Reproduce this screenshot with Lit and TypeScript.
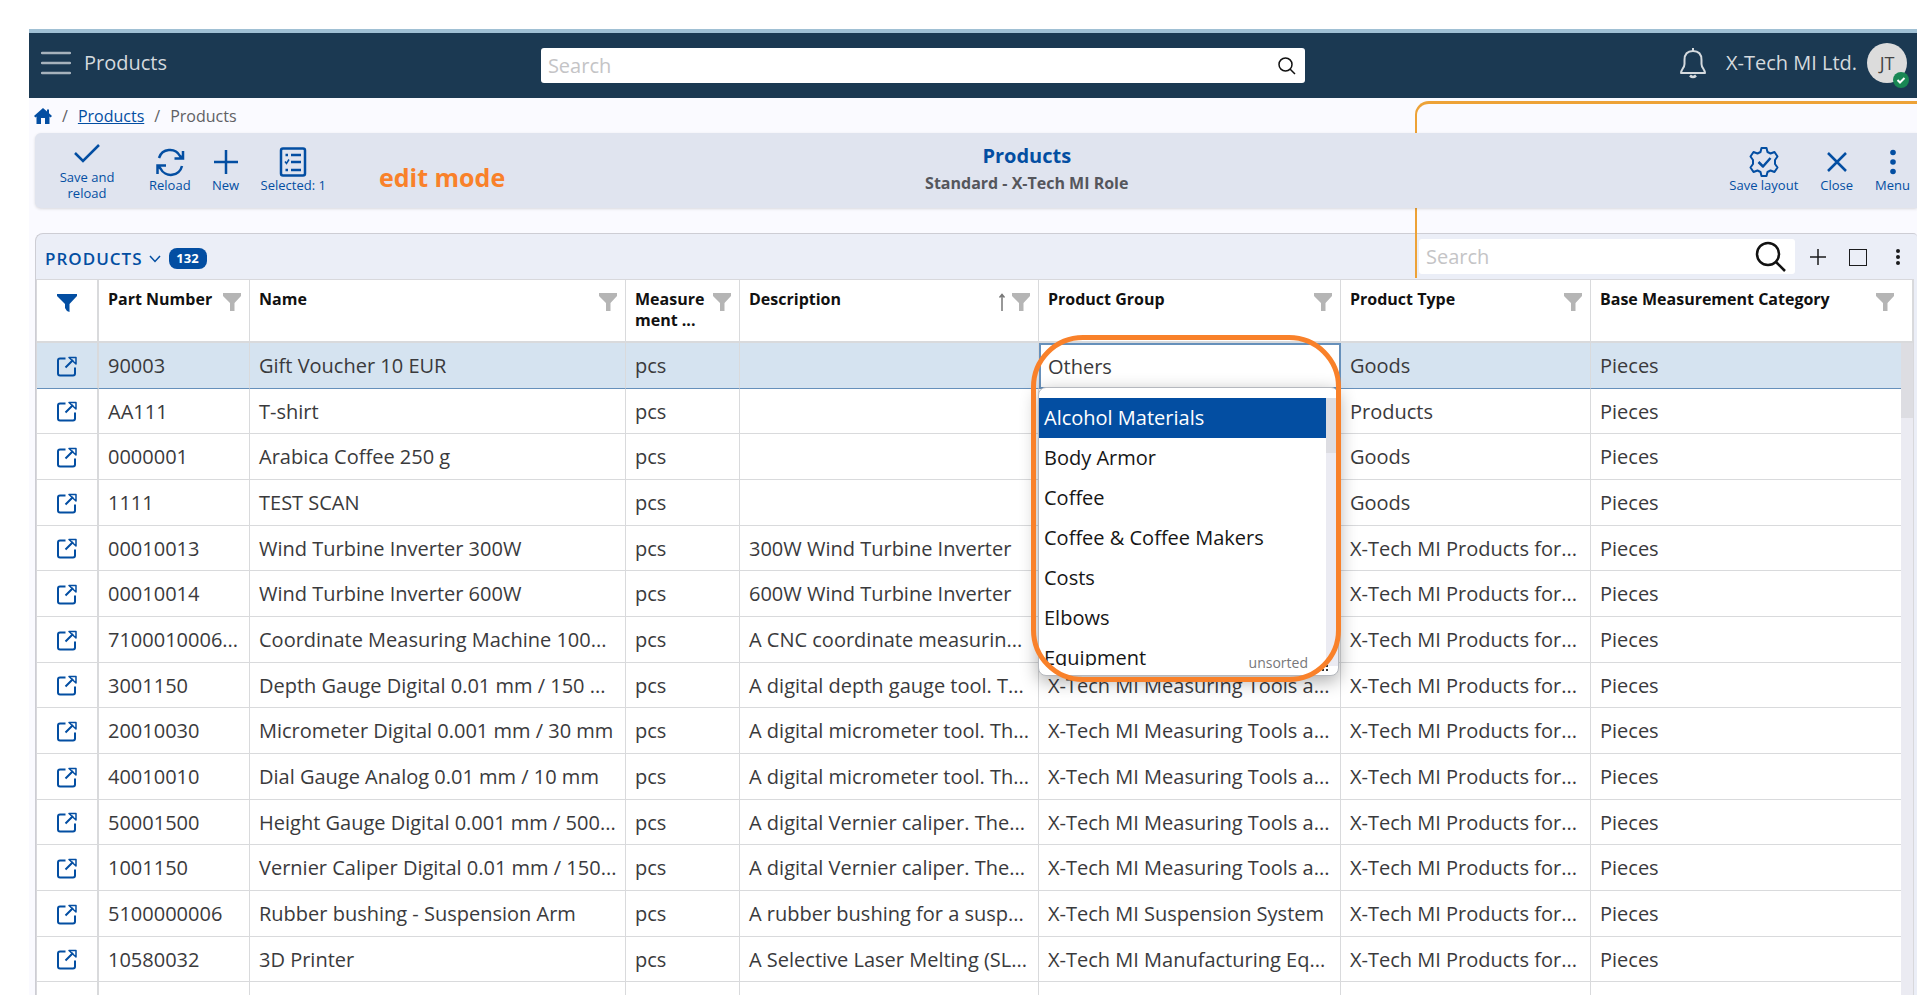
import { LitElement, html, css, svg } from "lit";
import { customElement } from "lit/decorators.js";

const funnel = html`<svg width="18" height="18" viewBox="0 0 18 18" fill="currentColor" aria-hidden="true"><path d="M0 0H18V3L11.500 10V18H7V10L0 3Z"/></svg>`;
const openIcon = html`<svg width="22" height="22" viewBox="0 0 22 22" fill="none" stroke="currentColor" stroke-width="2" aria-hidden="true"><path d="M9.500 3.500H4Q2 3.500 2 5.500V18.500Q2 20.500 4 20.500H17Q19 20.500 19 18.500V12.500M9.500 12.500L17 5"/><path d="M13 2.500H20V9Z" stroke-width="1.500" stroke-linejoin="round"/></svg>`;

const dots = svg`<circle cx="16" cy="5.500" r="2.800"/><circle cx="16" cy="15" r="2.800"/><circle cx="16" cy="24.500" r="2.800"/>`;

const rows: string[][] = [
  ["90003", "Gift Voucher 10 EUR", "", "Others", "Goods"],
  ["AA111", "T-shirt", "", "", "Products"],
  ["0000001", "Arabica Coffee 250 g", "", "", "Goods"],
  ["1111", "TEST SCAN", "", "", "Goods"],
  ["00010013", "Wind Turbine Inverter 300W", "300W Wind Turbine Inverter", "", "X-Tech MI Products for..."],
  ["00010014", "Wind Turbine Inverter 600W", "600W Wind Turbine Inverter", "", "X-Tech MI Products for..."],
  ["7100010006...", "Coordinate Measuring Machine 100...", "A CNC coordinate measurin...", "", "X-Tech MI Products for..."],
  ["3001150", "Depth Gauge Digital 0.01 mm / 150 ...", "A digital depth gauge tool. T...", "X-Tech MI Measuring Tools a...", "X-Tech MI Products for..."],
  ["20010030", "Micrometer Digital 0.001 mm / 30 mm", "A digital micrometer tool. Th...", "X-Tech MI Measuring Tools a...", "X-Tech MI Products for..."],
  ["40010010", "Dial Gauge Analog 0.01 mm / 10 mm", "A digital micrometer tool. Th...", "X-Tech MI Measuring Tools a...", "X-Tech MI Products for..."],
  ["50001500", "Height Gauge Digital 0.001 mm / 500...", "A digital Vernier caliper. The...", "X-Tech MI Measuring Tools a...", "X-Tech MI Products for..."],
  ["1001150", "Vernier Caliper Digital 0.01 mm / 150...", "A digital Vernier caliper. The...", "X-Tech MI Measuring Tools a...", "X-Tech MI Products for..."],
  ["5100000006", "Rubber bushing - Suspension Arm", "A rubber bushing for a susp...", "X-Tech MI Suspension System", "X-Tech MI Products for..."],
  ["10580032", "3D Printer", "A Selective Laser Melting (SL...", "X-Tech MI Manufacturing Eq...", "X-Tech MI Products for..."],
];
const groups = ["Alcohol Materials", "Body Armor", "Coffee", "Coffee & Coffee Makers", "Costs", "Elbows", "Equipment"];

@customElement("app-root")
export class AppRoot extends LitElement {
  static styles = css`
    :host { display: block; height: 100vh; overflow: hidden; box-sizing: border-box; padding: 29px 0 0 29px; background: #fff; color: #3a3a3c; font: 20px/28px "Open Sans", "Noto Sans", sans-serif; }
    * { box-sizing: border-box; }
    button { font: inherit; color: inherit; background: none; border: 0; padding: 0; margin: 0; display: flex; align-items: center; justify-content: center; }
    input { font: inherit; border: 0; outline: 0; padding: 0; min-width: 0; background: #fff; color: #333; }
    input::placeholder { color: #c4c4c6; opacity: 1; }
    svg { display: block; flex: none; }
    .page { position: relative; background: #fafaff; height: 100%; }
    header { position: relative; display: grid; grid-template-columns: 5fr 764px 6fr; column-gap: 11px; align-items: center; height: 69px; border-top: 4px solid #a0c0d4; background: #1b3952; color: #d5dade; }
    .brand { display: flex; align-items: center; gap: 13px; padding: 0 0 5px 12px; }
    .account { display: flex; align-items: center; justify-content: flex-end; padding: 0 10px 5px 0; }
    .company { padding: 0 10px 0 19px; }
    .avatar { position: relative; width: 40px; height: 40px; border-radius: 50%; background: #dcdcdc; color: #444; font-size: 18px; }
    .status { position: absolute; right: -2px; bottom: -5px; }
    .search { display: flex; align-items: center; height: 35px; background: #fff; border-radius: 3px; padding: 0 8px 0 7px; color: #111; }
    .search input { flex: 1; }
    nav { display: flex; align-items: center; gap: 10px; height: 35px; padding-left: 5px; font-size: 16px; line-height: 24px; color: #606064; }
    nav a { color: #034ea2; }
    .toolbar { position: relative; z-index: 2; display: grid; grid-template-columns: 9fr auto 8fr; height: 75px; margin-left: 6px; background: #e0e4ef; border-radius: 6px 0 0 6px; box-shadow: 0 1px 3px #00000022; color: #034ea2; }
    .tools { display: flex; align-items: center; font-size: 13px; line-height: 16px; padding-bottom: 1px; }
    .tools button { flex-direction: column; gap: 0; }
    .left { padding-left: 18px; gap: 20px; }
    .right { justify-content: flex-end; gap: 22px; padding-right: 7px; }
    .save { width: 68px; margin-right: 8px; }
    .mode { margin: 14px 0 0 33px; font-size: 25px; line-height: 32px; font-weight: 700; color: #f9812a; }
    .title { text-align: center; padding: 9px 0 0 3px; font-weight: 700; font-size: 16px; line-height: 26px; color: #55565c; }
    h1 { margin: 0; font-size: 20px; line-height: 28px; color: #034ea2; }
    .panel { position: relative; margin: 25px 0 0 6px; border: 1px solid #cdcdd4; border-right: 0; border-radius: 8px 4px 0 0; background: #ebeef7; }
    .panelbar { display: flex; align-items: center; height: 45px; padding: 0 9px; color: #1b1b1d; }
    .caption { display: flex; align-items: center; padding-top: 4px; }
    h2 { margin: 0; font-size: 17px; line-height: 24px; font-weight: 600; letter-spacing: 1px; color: #034ea2; }
    .chevron { color: #034ea2; margin: 0 8px 0 6px; }
    .count { width: 38px; height: 21px; border-radius: 8px; background: #034ea2; color: #fff; font-size: 13px; font-weight: 700; line-height: 21px; text-align: center; }
    .filter { width: 376px; margin: 0 13px 0 auto; }
    .icons { display: flex; gap: 20px; }
    .grid { position: relative; border: solid #d8d8dc; border-width: 1px 1px 0 1px; background: #fff; margin: 0 3px 0 0; }
    table { width: 100%; table-layout: fixed; border-collapse: separate; border-spacing: 0; }
    .c0 { width: 62px; } .c1 { width: 151px; } .c2 { width: 376px; } .c3 { width: 114px; } .c4 { width: 299px; } .c5 { width: 302px; } .c6 { width: 250px; }
    th { height: 63px; border-right: 1px solid #d9dadc; border-bottom: 2px solid #d9dadc; padding: 9px 8px 0 9px; vertical-align: top; text-align: left; font-size: 16px; line-height: 21px; font-weight: 700; color: #111; white-space: nowrap; }
    .hd { display: flex; align-items: flex-start; justify-content: space-between; }
    .hd svg { margin-top: 4px; color: #b5b5b5; }
    th:last-child svg { margin-right: 10px; }
    .hd .sort { margin: 4px 6px 0 auto; color: #777; }
    td { height: 46px; border-right: 1px solid #d9dadc; border-bottom: 1px solid #d9dadc; padding: 1px 0 0 9px; white-space: nowrap; overflow: hidden; background: #fff; }
    tbody tr:nth-child(3n + 2) td { height: 45px; }
    th:first-child, td:first-child { border-right-width: 2px; padding-left: 0; padding-right: 0; }
    td:first-child { padding-top: 0; }
    td:first-child button, th:first-child button { margin: 0 auto; color: #034ea2; }
    th:first-child button { margin-top: 5px; }
    tbody .sel td { background: #d5e3f0; border-bottom-color: #6690bb; }
    tbody .sel .edit { background: #fff; border: 2px solid #6690bb; padding-left: 7px; }
    .popup { position: absolute; left: 1001px; top: 107px; width: 301px; height: 289px; background: #fff; border: 1px solid #b5b8be; border-radius: 8px; box-shadow: 0 5px 18px #00000055; color: #161616; overflow: hidden; }
    .list { display: flex; margin-top: 10px; height: 268px; overflow: hidden; }
    ul { list-style: none; margin: 0; padding: 0; flex: 1; }
    li { height: 40px; line-height: 40px; padding-left: 5px; }
    .on { background: #034ea2; color: #fff; }
    .track { width: 12px; background: #ebebf2; }
    .thumb { height: 55px; background: #dddde2; }
    .unsorted { position: absolute; right: 30px; bottom: 2px; font-size: 14px; line-height: 20px; color: #77777a; background: #fff; }
    .grip { position: absolute; right: 9px; bottom: 3px; }
    .mark { position: absolute; left: 994px; top: 55px; width: 310px; height: 347px; border: 5px solid #f9812a; border-radius: 52px; pointer-events: none; }
    .vscroll { position: absolute; right: 0; top: 63px; bottom: 0; width: 12px; background: #ebebf2; }
    .vthumb { height: 75px; background: #dddde2; }
    .outline { position: absolute; z-index: 1; right: 0; top: 72px; width: 502px; height: 177px; border: solid #eda237; border-width: 3px 0 0 2px; border-radius: 14px 0 0 0; pointer-events: none; }
  `;

  private head(label: unknown, sort = false) {
    return html`<th scope="col"><div class="hd"><span>${label}</span>${sort ? html`<svg class="sort" width="8" height="18" viewBox="0 0 8 18" fill="none" stroke="currentColor" stroke-width="1.500"><path d="M4 18V1M1.500 4.500L4 1.500L6.500 4.500"/></svg>` : ""}${funnel}</div></th>`;
  }

  render() {
    return html`<div class="page">
      <header>
        <div class="brand">
          <button aria-label="Main menu"><svg width="30" height="26" viewBox="0 0 30 26" stroke="#a6b2bc" stroke-width="2.500" stroke-linecap="round"><path d="M1 3H29M1 13H29M1 23H29"/></svg></button>
          <span>Products</span>
        </div>
        <label class="search"><input type="search" aria-label="Search" placeholder="Search"><svg width="20" height="20" viewBox="0 0 20 20" fill="none" stroke="currentColor" stroke-width="1.500"><circle cx="8.500" cy="8.500" r="6.500"/><path d="M13 13L18 18"/></svg></label>
        <div class="account">
          <button aria-label="Notifications"><svg width="28" height="32" viewBox="0 0 28 32" fill="none" stroke="#d5dade" stroke-width="2" stroke-linejoin="round"><path d="M14 4V1M14 4C8 4 5.500 8 5.500 13V17C5.500 21 2 22.500 2 26H26C26 22.500 22.500 21 22.500 17V13C22.500 8 20 4 14 4Z"/><path d="M11 28.500Q14 31.500 17 28.500" stroke-width="2.500"/></svg></button>
          <span class="company">X-Tech MI Ltd.</span>
          <button class="avatar">JT<svg class="status" width="16" height="16" viewBox="0 0 16 16"><circle cx="8" cy="8" r="8" fill="#198754"/><path d="M4.500 8L7 10.500L11.500 6" fill="none" stroke="#fff" stroke-width="2"/></svg></button>
        </div>
      </header>
      <div class="outline"></div>
      <nav aria-label="Breadcrumb">
        <a href="#" aria-label="Home"><svg width="18" height="16" viewBox="0 0 18 16" fill="currentColor"><path d="M9 0L13 3.500V1.500H15V5.300L18 8L16.500 9.500L15.500 8.500V16H11V10H7V16H2.500V8.500L1.500 9.500L0 8Z"/></svg></a>
        <span>/</span><a href="#">Products</a><span>/</span><span>Products</span>
      </nav>
      <div class="toolbar">
        <div class="tools left">
          <button class="save"><svg width="28" height="30" viewBox="0 -3 28 30" fill="none" stroke="currentColor" stroke-width="2.500"><path d="M2 11L10 19L26 3"/></svg>Save and<br>reload</button>
          <button><svg width="30" height="30" viewBox="0 0 30 30" fill="none" stroke="currentColor" stroke-width="2.500"><path d="M4 11A11.500 11.500 0 0 1 25 9L27 11M28 4V11.500H19.500M27 19A11.500 11.500 0 0 1 5.500 21.500L3 19M2.500 27V18.500H11"/></svg>Reload</button>
          <button><svg width="30" height="30" viewBox="0 0 30 30" fill="none" stroke="currentColor" stroke-width="2.500"><path d="M15 3V27M3 15H27"/></svg>New</button>
          <button><svg width="30" height="30" viewBox="0 0 30 30" fill="none" stroke="currentColor" stroke-width="2.500"><rect x="3" y="1.500" width="24" height="27" rx="2"/><path d="M13 8H23M13 15H23M13 23H23M7.500 8H10M7.500 23H10"/><path d="M7 14.500L8.500 16.500L11 12.500" stroke-width="1.500"/></svg>Selected: 1</button>
          <span class="mode">edit mode</span>
        </div>
        <div class="title"><h1>Products</h1>Standard - X-Tech MI Role</div>
        <div class="tools right">
          <button><svg width="30" height="30" viewBox="0 0 30 30" fill="none" stroke="currentColor" stroke-width="2" stroke-linejoin="round"><path d="M12.500 1H17.500L18.500 5L21.500 6.500L25.500 5L28.500 9.500L26 13V17L28.500 20.500L25.500 25L21.500 23.500L18.500 25L17.500 29H12.500L11.500 25L8.500 23.500L4.500 25L1.500 20.500L4 17V13L1.500 9.500L4.500 5L8.500 6.500L11.500 5Z"/><path d="M9.500 15L14 19.500L21.500 11" stroke-width="2.500"/></svg>Save layout</button>
          <button><svg width="30" height="30" viewBox="0 0 30 30" fill="none" stroke="currentColor" stroke-width="2.500"><path d="M6 6L24 24M24 6L6 24"/></svg>Close</button>
          <button><svg width="32" height="30" viewBox="0 0 32 30" fill="currentColor">${dots}</svg>Menu</button>
        </div>
      </div>
      <section class="panel">
        <div class="panelbar">
          <div class="caption">
            <h2>PRODUCTS</h2>
            <button class="chevron" aria-label="Views"><svg width="12" height="8" viewBox="0 0 12 8" fill="none" stroke="currentColor" stroke-width="1.500"><path d="M1 1L6 6.500L11 1"/></svg></button>
            <span class="count">132</span>
          </div>
          <label class="search filter"><input type="search" aria-label="Search products" placeholder="Search"><svg width="32" height="32" viewBox="0 0 32 32" fill="none" stroke="currentColor" stroke-width="2.500"><circle cx="13" cy="13" r="11"/><path d="M21 21L30 30"/></svg></label>
          <div class="icons">
            <button aria-label="Add"><svg width="20" height="20" viewBox="0 0 20 20" stroke="currentColor" stroke-width="1.500"><path d="M10 2V18M2 10H18"/></svg></button>
            <button aria-label="Maximize"><svg width="20" height="20" viewBox="0 0 20 20" fill="none" stroke="currentColor" stroke-width="1"><rect x="1.500" y="2.500" width="17" height="16"/></svg></button>
            <button aria-label="Panel menu"><svg width="20" height="20" viewBox="0 0 20 20" fill="currentColor"><circle cx="10" cy="4" r="2"/><circle cx="10" cy="10" r="2"/><circle cx="10" cy="16" r="2"/></svg></button>
          </div>
        </div>
        <div class="grid">
          <table>
            <colgroup><col class="c0"><col class="c1"><col class="c2"><col class="c3"><col class="c4"><col class="c5"><col class="c6"><col></colgroup>
            <thead><tr><th scope="col"><button aria-label="Filter"><svg width="20" height="18" viewBox="0 0 20 18" fill="currentColor"><path d="M0 0H20V2L12.500 10V18Q9 17 8 14V10L0 2Z"/></svg></button></th>
              ${this.head("Part Number")}${this.head("Name")}${this.head(html`Measure<br>ment ...`)}${this.head("Description", true)}${this.head("Product Group")}${this.head("Product Type")}${this.head("Base Measurement Category")}</tr></thead>
            <tbody>
              ${rows.map((r, i) => html`<tr class=${i === 0 ? "sel" : ""}><td><button aria-label="Open">${openIcon}</button></td><td>${r[0]}</td><td>${r[1]}</td><td>pcs</td><td>${r[2]}</td><td class=${i === 0 ? "edit" : ""}>${r[3]}</td><td>${r[4]}</td><td>Pieces</td></tr>`)}
              <tr><td><button aria-label="Open">${openIcon}</button></td><td></td><td></td><td></td><td></td><td></td><td></td><td></td></tr>
            </tbody>
          </table>
          <div class="vscroll"><div class="vthumb"></div></div>
          <div class="popup">
            <div class="list"><ul>${groups.map((g, i) => html`<li class=${i === 0 ? "on" : ""}>${g}</li>`)}</ul><div class="track"><div class="thumb"></div></div></div>
            <span class="unsorted">unsorted</span>
            <svg class="grip" width="11" height="11" viewBox="0 0 11 11" fill="#333"><path d="M8 0h2v2h-2zM4 4h2v2h-2zM8 4h2v2h-2zM0 8h2v2h-2zM4 8h2v2h-2zM8 8h2v2h-2z"/></svg>
          </div>
          <div class="mark"></div>
        </div>
      </section>
    </div>`;
  }
}
